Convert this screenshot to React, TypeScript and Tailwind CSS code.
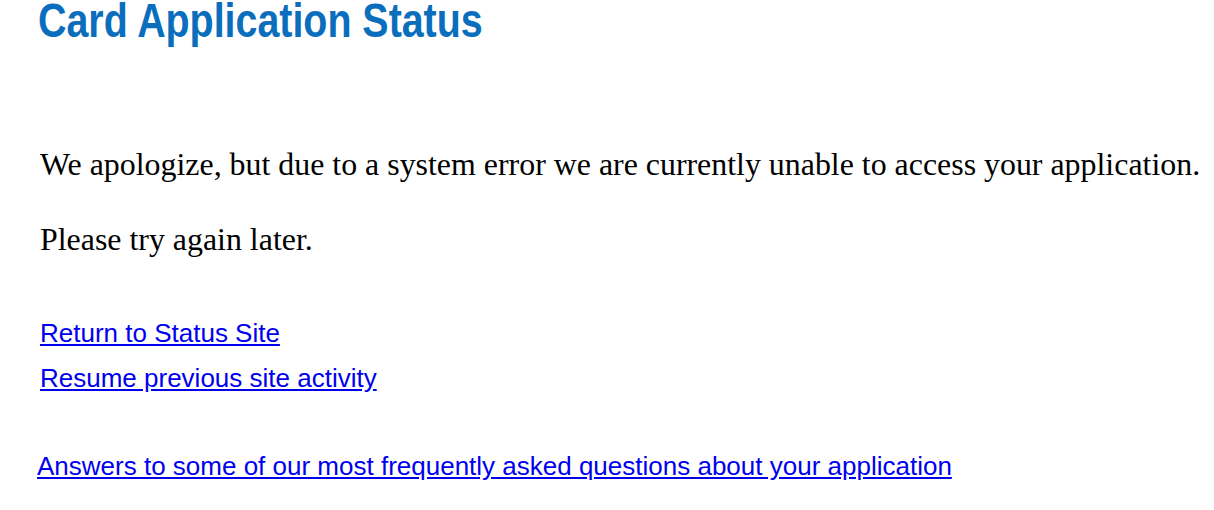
export default function App() {
  return (
    <div className="w-[1214px] h-[510px] bg-white overflow-hidden">
      <h1 className="ml-[38px] text-[#0a6ebd] text-[48px] leading-[41px] font-bold font-['Liberation_Sans',Arial,sans-serif] origin-left scale-x-[0.82] whitespace-nowrap">
        Card Application Status
      </h1>
      <div className="ml-[40px] mt-[106px] font-['Liberation_Serif','Times_New_Roman',serif] text-[31.9px] leading-[36px] text-black whitespace-nowrap">
        <p>We apologize, but due to a system error we are currently unable to access your application.</p>
        <p className="mt-[39px]">Please try again later.</p>
      </div>
      <div className="ml-[40px] mt-[60px] font-['Liberation_Sans',Arial,sans-serif] text-[26px] leading-[30px]">
        <a href="#" className="block w-fit text-[#0000ee] underline">Return to Status Site</a>
        <a href="#" className="block w-fit mt-[15px] text-[#0000ee] underline">Resume previous site activity</a>
      </div>
      <div className="ml-[37px] mt-[58px] font-['Liberation_Sans',Arial,sans-serif] text-[26px] leading-[30px]">
        <a href="#" className="text-[#0000ee] underline">Answers to some of our most frequently asked questions about your application</a>
      </div>
    </div>
  );
}
